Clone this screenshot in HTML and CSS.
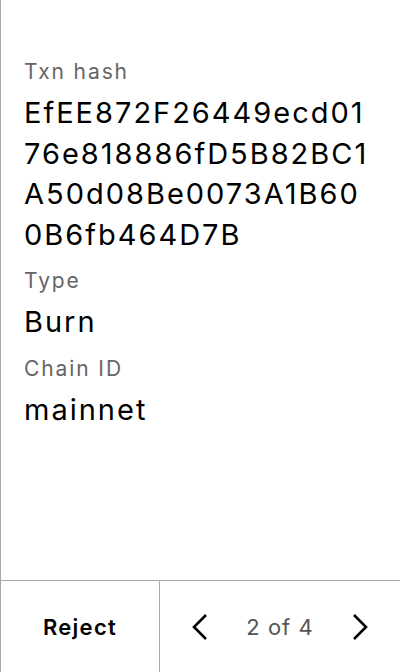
FILE: index.html
```html
<!DOCTYPE html>
<html lang="en">
<head>
<meta charset="utf-8">
<link rel="stylesheet" href="styles.css">
</head>
<body>
<div class="screen">
  <main class="content">
    <div class="field">
      <div class="label">Txn hash</div>
      <div class="value">EfEE872F26449ecd01<br>76e818886fD5B82BC1<br>A50d08Be0073A1B60<br>0B6fb464D7B</div>
    </div>
    <div class="field">
      <div class="label">Type</div>
      <div class="value">Burn</div>
    </div>
    <div class="field">
      <div class="label">Chain ID</div>
      <div class="value">mainnet</div>
    </div>
  </main>
  <footer class="footer">
    <button class="reject">Reject</button>
    <div class="pager">
      <button class="nav" aria-label="Previous">
        <svg width="16" height="26" viewBox="0 0 16 26"><path d="M14 1 L2 13 L14 25" fill="none" stroke="#000" stroke-width="2.6" stroke-linejoin="miter"/></svg>
      </button>
      <span class="count">2 of 4</span>
      <button class="nav" aria-label="Next">
        <svg width="16" height="26" viewBox="0 0 16 26"><path d="M2 1 L14 13 L2 25" fill="none" stroke="#000" stroke-width="2.6" stroke-linejoin="miter"/></svg>
      </button>
    </div>
  </footer>
</div>
</body>
</html>
```

FILE: styles.css
```css
* { box-sizing: border-box; }
html, body { margin: 0; padding: 0; background: #fff; }
body { font-family: Inter, "Noto Sans", sans-serif; }
.screen {
  width: 400px;
  height: 672px;
  display: flex;
  flex-direction: column;
  border-left: 1px solid #a8a8a8;
}
.content {
  flex: 1;
  padding: 57px 24px 0 23px;
  display: flex;
  flex-direction: column;
  gap: 11px;
}
.field { display: flex; flex-direction: column; gap: 6px; }
.label {
  font-size: 21px;
  line-height: 30px;
  letter-spacing: 1.9px;
  color: #666;
}
.value {
  font-size: 29px;
  line-height: 40.6px;
  letter-spacing: 2px;
  color: #000;
  white-space: nowrap;
}
.footer {
  height: 92px;
  border-top: 1px solid #a8a8a8;
  display: flex;
}
button {
  font-family: inherit;
  background: none;
  border: 0;
  padding: 0;
  cursor: pointer;
}
.reject {
  width: 159px;
  border-right: 1px solid #a8a8a8;
  font-size: 22px;
  font-weight: 600;
  letter-spacing: 1.3px;
  color: #000;
}
.pager {
  flex: 1;
  display: flex;
  align-items: center;
  justify-content: space-between;
  padding: 0 24px;
}
.nav {
  width: 32px;
  height: 40px;
  display: flex;
  align-items: center;
  justify-content: center;
}
.count {
  font-size: 22px;
  letter-spacing: 1px;
  color: #555;
}
```
